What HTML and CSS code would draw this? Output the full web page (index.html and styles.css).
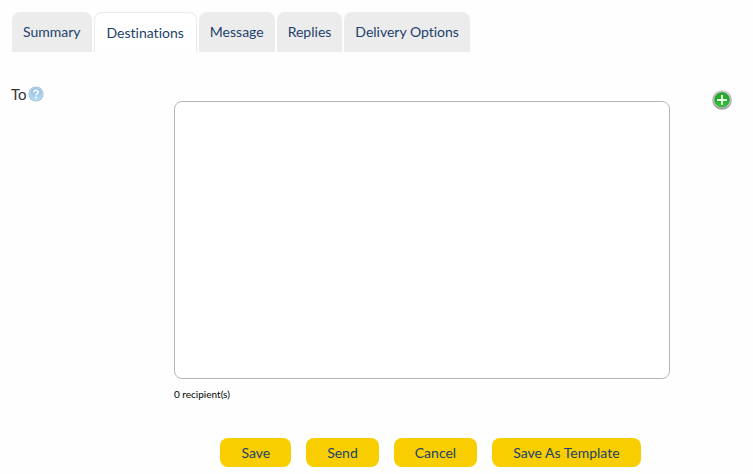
FILE: index.html
```html
<!DOCTYPE html>
<html lang="en">
<head>
  <meta charset="UTF-8">
  <meta name="viewport" content="width=device-width, initial-scale=1.0">
  <title>Destinations</title>
  <link rel="stylesheet" href="styles.css">
</head>
<body>

<nav class="tabs">
  <a class="tab" href="#summary">Summary</a>
  <a class="tab active" href="#destinations" aria-current="page">Destinations</a>
  <a class="tab" href="#message">Message</a>
  <a class="tab" href="#replies">Replies</a>
  <a class="tab" href="#delivery">Delivery Options</a>
</nav>

<form class="form">
  <div class="row">
    <div class="label">
      <label for="recipients">To</label>
      <button type="button" class="icon-button" aria-label="Help">
        <svg width="16" height="16" viewBox="0 0 16 16">
          <defs>
            <linearGradient id="helpFill" x1="0" y1="0" x2="0" y2="1">
              <stop offset="0" stop-color="#8fbbe0"/>
              <stop offset="1" stop-color="#b4dcf4"/>
            </linearGradient>
          </defs>
          <circle cx="8" cy="8" r="7.6" fill="#9dbcd6"/>
          <circle cx="8" cy="8" r="6.3" fill="url(#helpFill)" stroke="#c6dff2" stroke-width="0.9"/>
          <path d="M5.9 6.3C5.9 4.9 6.8 4.2 8 4.2s2.2.7 2.2 1.9c0 1.5-2.1 1.6-2.1 3.1" fill="none" stroke="#fff" stroke-width="1.6"/>
          <circle cx="8.1" cy="11.4" r="1" fill="#fff"/>
        </svg>
      </button>
    </div>

    <div class="field">
      <textarea id="recipients" class="recipients"></textarea>
      <div class="count">0 recipient(s)</div>
    </div>

    <button type="button" class="icon-button add" aria-label="Add destination">
      <svg width="20" height="20" viewBox="0 0 20 20">
        <defs>
          <linearGradient id="ring" x1="0" y1="0" x2="0" y2="1">
            <stop offset="0" stop-color="#c6c6c6"/>
            <stop offset="1" stop-color="#9a9a9a"/>
          </linearGradient>
          <linearGradient id="addFill" x1="0" y1="0" x2="0" y2="1">
            <stop offset="0" stop-color="#2fa535"/>
            <stop offset="0.5" stop-color="#1fae28"/>
            <stop offset="1" stop-color="#35cf3b"/>
          </linearGradient>
        </defs>
        <circle cx="10" cy="10" r="9.8" fill="url(#ring)"/>
        <circle cx="10" cy="9.8" r="8.5" fill="#d2d2d2"/>
        <circle cx="10" cy="9.8" r="7.4" fill="url(#addFill)" stroke="#2b8f30" stroke-width="0.6"/>
        <path d="M9 5h2v4h4v2h-4v4H9v-4H5V9h4z" fill="#e6fae6"/>
      </svg>
    </button>
  </div>

  <div class="actions">
    <button type="submit" class="button">Save</button>
    <button type="button" class="button">Send</button>
    <button type="button" class="button">Cancel</button>
    <button type="button" class="button">Save As Template</button>
  </div>
</form>

</body>
</html>
```

FILE: styles.css
```css
body {
  font-family: Lato, "Liberation Sans", sans-serif;
  font-size: 14px;
  font-variant-ligatures: none;
  line-height: 20px;
  background: #fefefe;
  color: #333;
  margin: 0;
  padding: 12px 21px 7px 11px;
}

/* Tabs */
.tabs {
  display: flex;
  align-items: flex-start;
  gap: 2px;
  padding-left: 1px;
}

.tab {
  box-sizing: border-box;
  padding: 10px 11px;
  background: #ececec;
  border-radius: 8px 8px 0 0;
  color: #1d3f6b;
  text-decoration: none;
}

.tab.active {
  padding: 10px 12px;
  background: #fff;
  border: 1px solid #ececec;
  border-bottom: none;
}

/* Form */
.row {
  display: grid;
  grid-template-columns: 163px 1fr 20px;
  margin-top: 31px;
}

.label {
  display: flex;
  align-items: center;
  align-self: start;
  gap: 1px;
  font-size: 15px;
}

.field {
  margin: 17px 42px 0 0;
}

.recipients {
  display: block;
  box-sizing: border-box;
  width: 100%;
  height: 278px;
  border: 1px solid #b5b5b5;
  border-radius: 8px;
  background: #fff;
  font: inherit;
  resize: none;
}

.count {
  margin-top: 5px;
  color: #000;
  font-size: 10px;
}

.icon-button {
  display: block;
  padding: 0;
  border: none;
  background: none;
  cursor: pointer;
}

.icon-button svg {
  display: block;
}

.add {
  align-self: start;
  margin-top: 6px;
}

/* Buttons */
.actions {
  display: flex;
  justify-content: center;
  gap: 15px;
  margin-top: 34px;
  padding-left: 118px;
}

.button {
  height: 29px;
  padding: 0 21px;
  border: none;
  border-radius: 8px;
  background: #f8ce00;
  color: #1d3f6b;
  font: inherit;
  cursor: pointer;
}
```
